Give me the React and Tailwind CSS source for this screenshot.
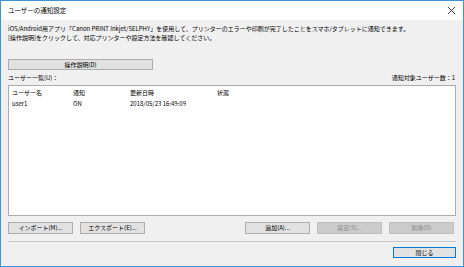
import React from "react";

const font = { fontFamily: '"Noto Sans CJK JP", "Noto Sans", sans-serif' };

function Btn({ children, className = "", disabled = false, def = false }) {
  return (
    <div
      className={
        "flex items-center justify-center text-[6px] leading-none " +
        (disabled
          ? "bg-[#cccccc] border border-[#bfbfbf] text-[#8a8a8a] "
          : def
          ? "bg-[#e1e1e1] border border-[#0078d7] text-black "
          : "bg-[#e1e1e1] border border-[#adadad] text-black ") +
        className
      }
    >
      {children}
    </div>
  );
}

export default function App() {
  return (
    <div
      className="w-[464px] h-[267px] border border-[#3d95d6] bg-[#f0f0f0] flex flex-col text-black"
      style={font}
    >
      <div className="h-[19px] bg-white flex items-center justify-between pl-[7px] pr-[6px]">
        <span className="text-[6.5px] leading-none">ユーザーの通知設定</span>
        <svg width="9" height="9" viewBox="0 0 9 9" className="mr-[1px]">
          <path d="M1 1 L8 8 M8 1 L1 8" stroke="#222" strokeWidth="0.9" />
        </svg>
      </div>
      <div className="flex-1 flex flex-col px-[7px]">
        <div className="mt-[4px] text-[6px] leading-[9px]">
          <div>iOS/Android用アプリ「Canon PRINT Inkjet/SELPHY」を使用して、プリンターのエラーや印刷が完了したことをスマホ/タブレットに通知できます。</div>
          <div>[操作説明]をクリックして、対応プリンターや設定方法を確認してください。</div>
        </div>
        <Btn className="mt-[17px] w-[145px] h-[11px]">操作説明(D)</Btn>
        <div className="mt-[5px] flex justify-between text-[6px] leading-none pr-[1px]">
          <span>ユーザー一覧(U)：</span>
          <span>通知対象ユーザー数：1</span>
        </div>
        <div className="mt-[4px] w-[448px] h-[131px] bg-white border border-[#acacac] text-[6px] leading-none">
          <div className="flex mt-[4px] pl-[3px]">
            <span className="w-[61px]">ユーザー名</span>
            <span className="w-[57px]">通知</span>
            <span className="w-[87px]">更新日時</span>
            <span>状態</span>
          </div>
          <div className="flex mt-[5px] pl-[3px]">
            <span className="w-[61px]">user1</span>
            <span className="w-[57px]">ON</span>
            <span className="w-[87px]">2018/05/23 16:49:09</span>
            <span></span>
          </div>
        </div>
        <div className="mt-[6px] flex items-center">
          <Btn className="w-[65px] h-[12px]">インポート(M)...</Btn>
          <Btn className="ml-[7px] w-[65px] h-[12px]">エクスポート(E)...</Btn>
          <Btn className="ml-[100px] w-[65px] h-[12px]">追加(A)...</Btn>
          <Btn disabled className="ml-[7px] w-[65px] h-[12px]">設定(S)...</Btn>
          <Btn disabled className="ml-[7px] w-[65px] h-[12px]">削除(D)</Btn>
        </div>
        <div className="mt-[7px] w-[448px] h-[1px] bg-[#c8c8c8]" />
        <div className="mt-[5px] flex justify-end w-[448px]">
          <Btn def className="w-[63px] h-[11px]">閉じる</Btn>
        </div>
      </div>
    </div>
  );
}
